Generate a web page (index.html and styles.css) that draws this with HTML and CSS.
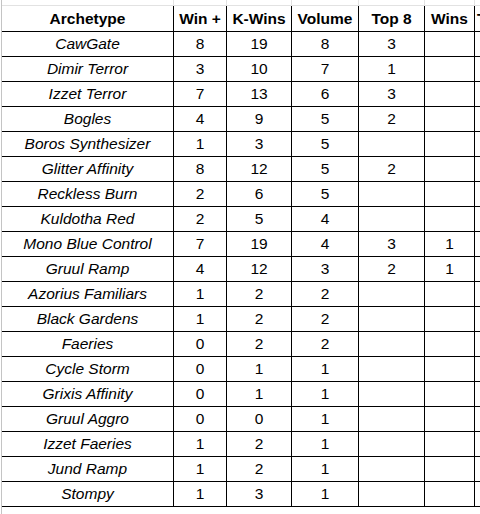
FILE: index.html
```html
<!DOCTYPE html>
<html>
<head>
<meta charset="utf-8">
<link rel="stylesheet" href="styles.css">
</head>
<body>
<div class="sheet">
  <div class="grid">
    <div class="ghost"></div><div class="ghost"></div><div class="ghost"></div><div class="ghost"></div><div class="ghost"></div><div class="ghost"></div><div class="ghost last"></div>

    <div class="cell head">Archetype</div><div class="cell head">Win +</div><div class="cell head">K-Wins</div><div class="cell head">Volume</div><div class="cell head">Top 8</div><div class="cell head">Wins</div><div class="cell head extra">Top 8 %</div>

    <div class="cell name">CawGate</div><div class="cell">8</div><div class="cell">19</div><div class="cell">8</div><div class="cell">3</div><div class="cell"></div><div class="cell extra"></div>
    <div class="cell name">Dimir Terror</div><div class="cell">3</div><div class="cell">10</div><div class="cell">7</div><div class="cell">1</div><div class="cell"></div><div class="cell extra"></div>
    <div class="cell name">Izzet Terror</div><div class="cell">7</div><div class="cell">13</div><div class="cell">6</div><div class="cell">3</div><div class="cell"></div><div class="cell extra"></div>
    <div class="cell name">Bogles</div><div class="cell">4</div><div class="cell">9</div><div class="cell">5</div><div class="cell">2</div><div class="cell"></div><div class="cell extra"></div>
    <div class="cell name">Boros Synthesizer</div><div class="cell">1</div><div class="cell">3</div><div class="cell">5</div><div class="cell"></div><div class="cell"></div><div class="cell extra"></div>
    <div class="cell name">Glitter Affinity</div><div class="cell">8</div><div class="cell">12</div><div class="cell">5</div><div class="cell">2</div><div class="cell"></div><div class="cell extra"></div>
    <div class="cell name">Reckless Burn</div><div class="cell">2</div><div class="cell">6</div><div class="cell">5</div><div class="cell"></div><div class="cell"></div><div class="cell extra"></div>
    <div class="cell name">Kuldotha Red</div><div class="cell">2</div><div class="cell">5</div><div class="cell">4</div><div class="cell"></div><div class="cell"></div><div class="cell extra"></div>
    <div class="cell name">Mono Blue Control</div><div class="cell">7</div><div class="cell">19</div><div class="cell">4</div><div class="cell">3</div><div class="cell">1</div><div class="cell extra"></div>
    <div class="cell name">Gruul Ramp</div><div class="cell">4</div><div class="cell">12</div><div class="cell">3</div><div class="cell">2</div><div class="cell">1</div><div class="cell extra"></div>
    <div class="cell name">Azorius Familiars</div><div class="cell">1</div><div class="cell">2</div><div class="cell">2</div><div class="cell"></div><div class="cell"></div><div class="cell extra"></div>
    <div class="cell name">Black Gardens</div><div class="cell">1</div><div class="cell">2</div><div class="cell">2</div><div class="cell"></div><div class="cell"></div><div class="cell extra"></div>
    <div class="cell name">Faeries</div><div class="cell">0</div><div class="cell">2</div><div class="cell">2</div><div class="cell"></div><div class="cell"></div><div class="cell extra"></div>
    <div class="cell name">Cycle Storm</div><div class="cell">0</div><div class="cell">1</div><div class="cell">1</div><div class="cell"></div><div class="cell"></div><div class="cell extra"></div>
    <div class="cell name">Grixis Affinity</div><div class="cell">0</div><div class="cell">1</div><div class="cell">1</div><div class="cell"></div><div class="cell"></div><div class="cell extra"></div>
    <div class="cell name">Gruul Aggro</div><div class="cell">0</div><div class="cell">0</div><div class="cell">1</div><div class="cell"></div><div class="cell"></div><div class="cell extra"></div>
    <div class="cell name">Izzet Faeries</div><div class="cell">1</div><div class="cell">2</div><div class="cell">1</div><div class="cell"></div><div class="cell"></div><div class="cell extra"></div>
    <div class="cell name">Jund Ramp</div><div class="cell">1</div><div class="cell">2</div><div class="cell">1</div><div class="cell"></div><div class="cell"></div><div class="cell extra"></div>
    <div class="cell name">Stompy</div><div class="cell">1</div><div class="cell">3</div><div class="cell">1</div><div class="cell"></div><div class="cell"></div><div class="cell extra"></div>
  </div>
</div>
</body>
</html>
```

FILE: styles.css
```css
html, body {
  margin: 0;
  padding: 0;
  overflow: hidden;
  background: #ffffff;
}

.sheet {
  margin-left: 1px;
  border-left: 1px solid #c4c4c4;
  height: 514px;
  font-family: "Liberation Sans", Arial, sans-serif;
  font-size: 15.5px;
  color: #000000;
}

.grid {
  display: grid;
  grid-template-columns: 172px 53px 65px 67px 66px 50px 60px;
  grid-template-rows: 6px 26px;
  grid-auto-rows: 25px;
  width: 533px;
}

.ghost {
  box-sizing: border-box;
  border-right: 1px solid #e2e2e2;
  border-bottom: 1px solid #e2e2e2;
}

.ghost.last {
  border-right: none;
}

.cell {
  box-sizing: border-box;
  border-right: 1px solid #000000;
  border-bottom: 1px solid #000000;
  display: flex;
  align-items: flex-end;
  justify-content: center;
  padding-bottom: 3px;
  line-height: normal;
  white-space: nowrap;
  overflow: hidden;
}

.head {
  font-weight: bold;
}

.name {
  font-style: italic;
}

.extra {
  border-right: none;
  justify-content: flex-start;
  padding-left: 2px;
}
```
